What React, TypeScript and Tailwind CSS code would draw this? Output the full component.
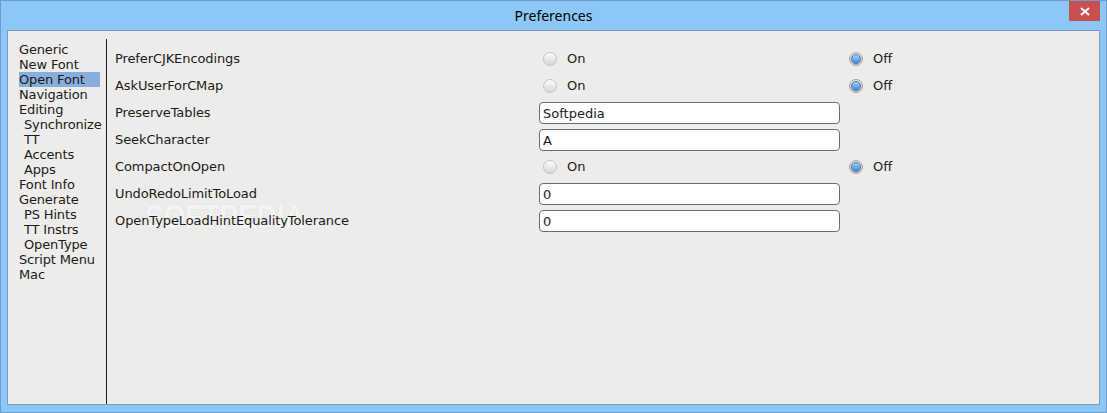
import React from 'react';

type Row =
  | { label: string; kind: 'radio'; value: boolean }
  | { label: string; kind: 'text'; value: string };

const sections: { name: string; sub?: boolean }[] = [
  { name: 'Generic' },
  { name: 'New Font' },
  { name: 'Open Font' },
  { name: 'Navigation' },
  { name: 'Editing' },
  { name: 'Synchronize', sub: true },
  { name: 'TT', sub: true },
  { name: 'Accents', sub: true },
  { name: 'Apps', sub: true },
  { name: 'Font Info' },
  { name: 'Generate' },
  { name: 'PS Hints', sub: true },
  { name: 'TT Instrs', sub: true },
  { name: 'OpenType', sub: true },
  { name: 'Script Menu' },
  { name: 'Mac' },
];

const rows: Row[] = [
  { label: 'PreferCJKEncodings', kind: 'radio', value: false },
  { label: 'AskUserForCMap', kind: 'radio', value: false },
  { label: 'PreserveTables', kind: 'text', value: 'Softpedia' },
  { label: 'SeekCharacter', kind: 'text', value: 'A' },
  { label: 'CompactOnOpen', kind: 'radio', value: false },
  { label: 'UndoRedoLimitToLoad', kind: 'text', value: '0' },
  { label: 'OpenTypeLoadHintEqualityTolerance', kind: 'text', value: '0' },
];

function Radio({ checked }: { checked: boolean }) {
  if (checked) {
    return (
      <span className="w-[14px] h-[14px] rounded-full border border-[#a4a4a4] bg-gradient-to-b from-[#e6e6e6] to-[#c4c4c4] flex items-center justify-center">
        <span className="w-[10px] h-[10px] rounded-full border border-[#3f78c2] bg-gradient-to-b from-[#a9cdf4] to-[#4588da]" />
      </span>
    );
  }
  return (
    <span className="w-[14px] h-[14px] rounded-full border border-[#c4c4c2] bg-gradient-to-b from-[#fdfdfd] to-[#d6d6d4]" />
  );
}

export default function App() {
  const selected = 'Open Font';

  return (
    <div
      className="w-[1107px] h-[413px] bg-[#8cc7f8] border border-[#6d9ccb] flex flex-col text-[#1b1b1b]"
      style={{ fontFamily: '"DejaVu Sans", sans-serif' }}
    >
      {/* Title bar */}
      <div className="h-[29px] flex-shrink-0 relative flex items-center justify-center">
        <span className="text-[14px] text-black" style={{ fontFamily: '"Noto Sans", sans-serif' }}>
          Preferences
        </span>
        <div className="absolute right-[6px] top-0 w-[31px] h-[20px] bg-[#c75050] flex items-center justify-center">
          <svg width="10" height="9" viewBox="0 0 10 9">
            <path d="M1 1 L9 8 M9 1 L1 8" stroke="#fff" strokeWidth="2" />
          </svg>
        </div>
      </div>

      {/* Content */}
      <div className="flex-1 mx-[6px] mb-[7px] border border-[#7b9cbf] bg-[#edecea] flex relative overflow-hidden">
        {/* watermark, sits under the option labels */}
        <div
          className="absolute left-[137px] top-[160px] text-[34px] font-bold text-white/70 select-none scale-x-[0.82] origin-left"
          style={{ fontFamily: '"Liberation Sans", sans-serif', textShadow: '0 0 2px rgba(0,0,0,0.08)' }}
        >
          SOFTPEDIA
        </div>

        {/* Section list */}
        <div className="w-[98px] flex-shrink-0 pl-[11px] pt-[11px] text-[13px] leading-[15px]">
          {sections.map((s) => (
            <div
              key={s.name}
              className={`w-[81px] whitespace-nowrap tracking-[-0.15px] ${s.sub ? 'pl-[5px]' : ''} ${
                s.name === selected ? 'bg-[#88aedc]' : ''
              }`}
            >
              {s.name}
            </div>
          ))}
        </div>
        <div className="w-px bg-[#1e1e1e] mt-[8px] flex-shrink-0" />

        {/* Options */}
        <div className="flex-1 pl-[8px] pt-[14px] text-[13px] relative">
          {rows.map((r) => (
            <div key={r.label} className="h-[27px] flex items-center">
              <div className="w-[424px] whitespace-nowrap tracking-[-0.1px]">{r.label}</div>
              {r.kind === 'radio' ? (
                <div className="flex items-center">
                  <div className="w-[310px] flex items-center pl-[4px] gap-[10px]">
                    <Radio checked={r.value} />
                    <span>On</span>
                  </div>
                  <div className="flex items-center gap-[10px]">
                    <Radio checked={!r.value} />
                    <span>Off</span>
                  </div>
                </div>
              ) : (
                <div className="w-[301px] h-[22px] bg-white border border-[#6e6e6e] rounded-[4px] flex items-center pl-[3px] pt-[2px]">
                  {r.value}
                </div>
              )}
            </div>
          ))}
        </div>
      </div>
    </div>
  );
}
